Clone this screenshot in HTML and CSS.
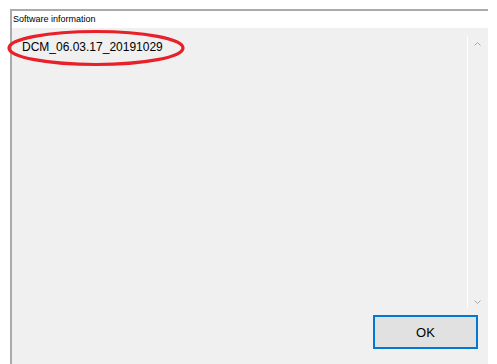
FILE: index.html
```html
<!DOCTYPE html>
<html>
<head>
    <meta charset="UTF-8">
    <title>Software information</title>
    <link rel="stylesheet" href="styles.css">
</head>
<body>
    <div class="window">
        <div class="title-bar">Software information</div>
        <div class="content">
            <div class="info-row">
                <div class="info-text">DCM_06.03.17_20191029</div>
                <div class="scrollbar">
                    <svg class="arrow" width="7" height="4" viewBox="0 0 7 4"><path d="M0.5 3.5 L3.5 0.5 L6.5 3.5" fill="none" stroke="#a8a8a8" stroke-width="1"/></svg>
                    <svg class="arrow" width="7" height="4" viewBox="0 0 7 4"><path d="M0.5 0.5 L3.5 3.5 L6.5 0.5" fill="none" stroke="#a8a8a8" stroke-width="1"/></svg>
                </div>
            </div>
            <div class="footer">
                <button class="ok-button" type="button">OK</button>
            </div>
        </div>
    </div>

    <!-- red mark drawn over the version -->
    <svg class="mark" width="200" height="50" viewBox="0 0 200 50">
        <ellipse cx="96" cy="19" rx="87" ry="16.5" fill="none" stroke="#e8202a" stroke-width="3.2"/>
    </svg>
</body>
</html>
```

FILE: styles.css
```css
body {
    margin: 0;
    padding: 0;
    background-color: #fff;
    font-family: 'Liberation Sans', Arial, sans-serif;
    height: 364px;
    overflow: hidden;
}

.window {
    margin-top: 9px;
    margin-left: 10px;
    width: 476px;
    border-top: 2px solid #ababab;
    border-left: 2px solid #ababab;
}

.title-bar {
    height: 17px;
    line-height: 17px;
    padding-left: 1px;
    font-size: 9px;
    color: #000;
    background-color: #fff;
}

.content {
    background-color: #f0f0f0;
    padding-top: 8px;
    height: 336px;
    box-sizing: border-box;
}

.info-row {
    display: flex;
    height: 272px;
}

.info-text {
    flex: 1;
    padding-top: 4px;
    padding-left: 10px;
    font-size: 12px;
    line-height: 15px;
    color: #000;
}

.scrollbar {
    width: 20px;
    border-left: 1px solid #fff;
    display: flex;
    flex-direction: column;
    justify-content: space-between;
    align-items: center;
    padding: 6px 0 4px 0;
    box-sizing: border-box;
    margin-right: 1px;
}

.arrow {
    display: block;
}

.footer {
    display: flex;
    justify-content: flex-end;
    padding-top: 7px;
    padding-right: 10px;
}

.ok-button {
    width: 105px;
    height: 34px;
    background-color: #e1e1e1;
    border: 2px solid #0078d7;
    font-family: 'Liberation Sans', Arial, sans-serif;
    font-size: 13px;
    color: #000;
    padding: 0;
}

.mark {
    position: absolute;
    left: 0;
    top: 29px;
}
```
